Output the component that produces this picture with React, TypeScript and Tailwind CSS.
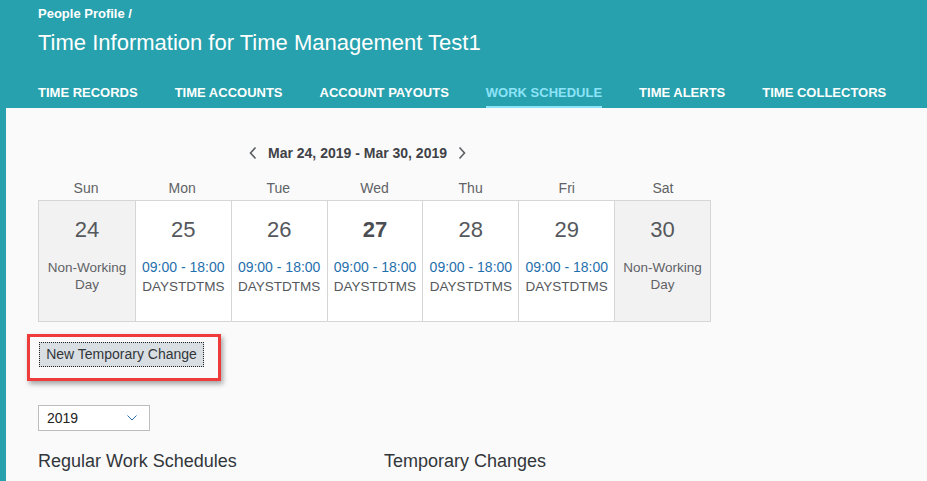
import React from "react";

const tabs = ["TIME RECORDS", "TIME ACCOUNTS", "ACCOUNT PAYOUTS", "WORK SCHEDULE", "TIME ALERTS", "TIME COLLECTORS"];

const days = [
  { name: "Sun", num: 24, off: true },
  { name: "Mon", num: 25 },
  { name: "Tue", num: 26 },
  { name: "Wed", num: 27, today: true },
  { name: "Thu", num: 28 },
  { name: "Fri", num: 29 },
  { name: "Sat", num: 30, off: true },
];

function Chevron({ dir }: { dir: "left" | "right" }) {
  return (
    <svg width="10" height="14" viewBox="0 0 10 14" aria-hidden="true">
      <polyline
        points={dir === "left" ? "7.5,1.5 2.5,7 7.5,12.5" : "2.5,1.5 7.5,7 2.5,12.5"}
        fill="none"
        stroke="#5b5e62"
        strokeWidth="1.6"
      />
    </svg>
  );
}

export default function App() {
  return (
    <div className="flex h-[481px] w-full flex-col overflow-hidden bg-[#27a1ad] font-['Liberation_Sans',Arial,sans-serif]">
      <header className="h-[108px] shrink-0 px-[38px] text-white">
        <p className="pt-[6px] text-[13px] font-semibold leading-[16px]">People Profile /</p>
        <h1 className="mt-[8px] text-[22px] leading-[26px]">Time Information for Time Management Test1</h1>
        <nav className="mt-[20px] flex gap-[37px] whitespace-nowrap">
          {tabs.map((tab) => {
            const active = tab === "WORK SCHEDULE";
            return (
              <span
                key={tab}
                className={
                  active
                    ? "flex h-[32px] items-center border-b-2 border-[#8de3f7] pt-[3px] text-[13px] font-bold text-[#8de3f7]"
                    : "flex h-[32px] items-center border-b-2 border-transparent pt-[3px] text-[13px] font-bold text-white"
                }
              >
                {tab}
              </span>
            );
          })}
        </nav>
      </header>

      <main className="ml-[6px] flex-1 bg-[#fafafa] px-[32px] text-[#32363a]">
        <div className="mt-[35px] flex h-[20px] items-center gap-[10px] pl-[210px]">
          <Chevron dir="left" />
          <span className="text-[14px] font-bold text-[#3f4246]">Mar 24, 2019 - Mar 30, 2019</span>
          <Chevron dir="right" />
        </div>

        <div className="mt-[13px] grid w-[673px] grid-cols-7">
          {days.map((d) => (
            <span key={d.name} className="text-center text-[14px] leading-[24px] text-[#5f6266]">
              {d.name}
            </span>
          ))}
        </div>

        <div className="grid w-[673px] grid-cols-7 border border-[#d6d6d6]">
          {days.map((d, i) => (
            <div
              key={d.num}
              className={
                (d.off ? "bg-[#f2f2f2] " : "bg-white ") +
                (i > 0 ? "border-l border-[#d6d6d6] " : "") +
                "flex h-[120px] flex-col items-center pt-[15px] text-center"
              }
            >
              <span className={d.today ? "text-[22px] font-bold leading-[28px] text-[#4a4d51]" : "text-[22px] leading-[28px] text-[#55585c]"}>
                {d.num}
              </span>
              {d.off ? (
                <span className="mt-[15px] text-[13.5px] leading-[17px] text-[#5f6266]">
                  Non-Working
                  <br />
                  Day
                </span>
              ) : (
                <span className="mt-[14px] leading-[19px]">
                  <span className="block text-[14px] text-[#1f6fad]">09:00 - 18:00</span>
                  <span className="block text-[13.5px] text-[#55585c]">DAYSTDTMS</span>
                </span>
              )}
            </div>
          ))}
        </div>

        <div className="-ml-[11px] mt-[12px] h-[47px] w-[194px] border-[3px] border-[#ee3b3b] pl-[9px] pt-[5px] shadow-[2px_3px_5px_rgba(0,0,0,0.35)]">
          <button className="h-[25px] w-[165px] border border-dotted border-[#222] bg-[#d9dee3] text-[14px] text-[#32363a]">
            New Temporary Change
          </button>
        </div>

        <div className="mt-[24px] flex h-[26px] w-[112px] items-center justify-between border border-[#bdbdbd] bg-white pl-[8px] pr-[12px] text-[14px] text-[#222]">
          <span>2019</span>
          <svg width="10" height="6" viewBox="0 0 10 6" aria-hidden="true">
            <polyline points="0.5,0.5 5,5 9.5,0.5" fill="none" stroke="#2a6fa8" strokeWidth="1" />
          </svg>
        </div>

        <div className="mt-[18px] flex text-[18px] leading-[24px] text-[#32363a]">
          <h2 className="w-[346px]">Regular Work Schedules</h2>
          <h2>Temporary Changes</h2>
        </div>
      </main>
    </div>
  );
}
